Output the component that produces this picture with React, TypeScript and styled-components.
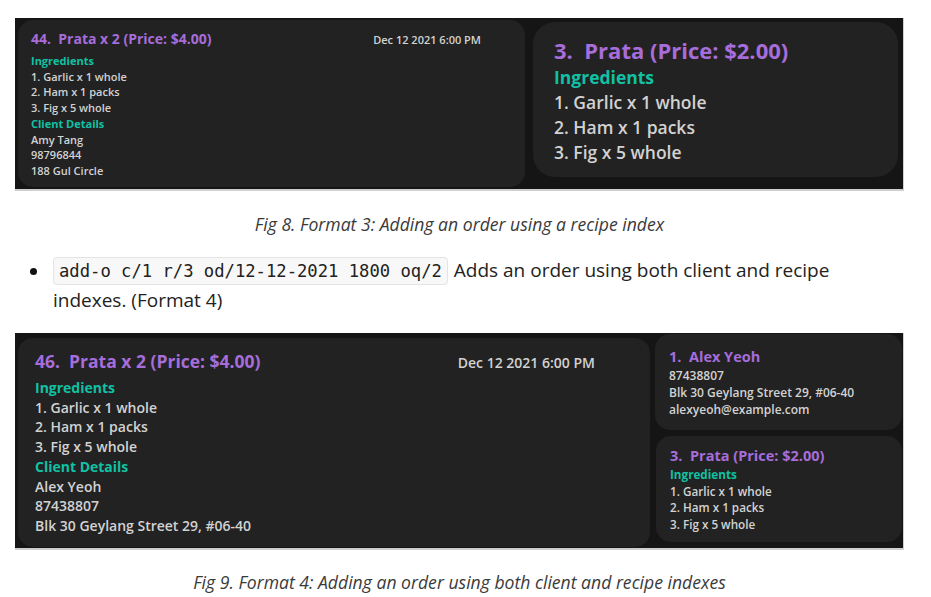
import React from "react";
import styled, { createGlobalStyle } from "styled-components";

const GlobalStyle = createGlobalStyle`
  html, body { margin: 0; padding: 0; background: #ffffff; }
  body { font-family: "Open Sans", "Liberation Sans", sans-serif; }
`;

const PURPLE = "#a66ddb";
const TEAL = "#11c1a3";
const TEXT = "#d2d2d2";

const Page = styled.div`
  width: 931px;
  height: 597px;
  box-sizing: border-box;
  padding: 18px 0 0 15px;
  overflow: hidden;
  display: flex;
  flex-direction: column;
`;

const Shot = styled.div<{ $h: number; $pl: number; $mt: number }>`
  width: 889px;
  height: ${(p) => p.$h}px;
  margin-top: ${(p) => p.$mt}px;
  box-sizing: border-box;
  flex-shrink: 0;
  padding-left: ${(p) => p.$pl}px;
  background: #151515;
  border-right: 1px solid #cfcfcf;
  border-bottom: 2px solid #cfcfcf;
  display: flex;
  align-items: flex-start;
  font-family: "Open Sans", sans-serif;
  font-weight: 600;
  color: ${TEXT};
`;

const Card = styled.div<{ $w: number; $h: number; $mt: number; $ml: number; $pt: number; $pl: number; $r?: number }>`
  width: ${(p) => p.$w}px;
  height: ${(p) => p.$h}px;
  margin-top: ${(p) => p.$mt}px;
  margin-left: ${(p) => p.$ml}px;
  padding: ${(p) => p.$pt}px 0 0 ${(p) => p.$pl}px;
  box-sizing: border-box;
  background: #222222;
  border-radius: ${(p) => p.$r ?? 15}px;
  flex-shrink: 0;
  display: flex;
  flex-direction: column;
`;

const Column = styled.div<{ $mt: number; $ml: number; $gap: number }>`
  display: flex;
  flex-direction: column;
  margin-top: ${(p) => p.$mt}px;
  margin-left: ${(p) => p.$ml}px;
  gap: ${(p) => p.$gap}px;
`;

const TitleRow = styled.div<{ $dateRight: number }>`
  display: flex;
  align-items: baseline;
  padding-right: ${(p) => p.$dateRight}px;
`;

const Title = styled.div<{ $size: number; $lh: number; $mb: number }>`
  color: ${PURPLE};
  font-weight: 700;
  font-size: ${(p) => p.$size}px;
  line-height: ${(p) => p.$lh}px;
  margin-bottom: ${(p) => p.$mb}px;
  white-space: pre;
`;

const DateText = styled.div<{ $size: number }>`
  margin-left: auto;
  font-size: ${(p) => p.$size}px;
  color: ${TEXT};
  white-space: nowrap;
`;

const Heading = styled.div<{ $size: number; $lh: number }>`
  color: ${TEAL};
  font-weight: 700;
  font-size: ${(p) => p.$size}px;
  line-height: ${(p) => p.$lh}px;
`;

const Line = styled.div<{ $size: number; $lh: number }>`
  font-size: ${(p) => p.$size}px;
  line-height: ${(p) => p.$lh}px;
  white-space: nowrap;
`;

const Caption = styled.div<{ $mt: number }>`
  width: 889px;
  text-align: center;
  font-family: "Open Sans", sans-serif;
  font-style: italic;
  font-size: 17.6px;
  line-height: 24px;
  color: #3a3a3a;
  margin-top: ${(p) => p.$mt}px;
`;

const List = styled.ul`
  list-style: none;
  margin: 20px 0 0 0;
  padding: 0;
  flex-shrink: 0;
`;

const Item = styled.li`
  position: relative;
  padding-left: 38px;
  width: 800px;
  font-family: "Open Sans", sans-serif;
  font-size: 19px;
  line-height: 29px;
  color: #222222;
  &::before {
    content: "";
    position: absolute;
    left: 15px;
    top: 12px;
    width: 7px;
    height: 7px;
    border-radius: 50%;
    background: #111111;
  }
`;

const Code = styled.code`
  font-family: "DejaVu Sans Mono", "Liberation Mono", monospace;
  font-size: 17.2px;
  padding: 3px 5px;
  margin-right: 1px;
  background: #f8f8f8;
  border: 1px solid #e4e4e4;
  border-radius: 4px;
  color: #222222;
`;

type Scale = {
  title: number;
  titleLh: number;
  titleMb: number;
  body: number;
  bodyLh: number;
};

const ingredients = ["1. Garlic x 1 whole", "2. Ham x 1 packs", "3. Fig x 5 whole"];

const OrderBody: React.FC<{
  s: Scale;
  index: string;
  date: string;
  dateRight: number;
  client: string[];
}> = ({ s, index, date, dateRight, client }) => (
  <>
    <TitleRow $dateRight={dateRight}>
      <Title $size={s.title} $lh={s.titleLh} $mb={s.titleMb}>
        {index + ".  Prata x 2 (Price: $4.00)"}
      </Title>
      <DateText $size={s.body}>{date}</DateText>
    </TitleRow>
    <Heading $size={s.body} $lh={s.bodyLh}>Ingredients</Heading>
    {ingredients.map((t) => (
      <Line key={t} $size={s.body} $lh={s.bodyLh}>{t}</Line>
    ))}
    <Heading $size={s.body} $lh={s.bodyLh}>Client Details</Heading>
    {client.map((t) => (
      <Line key={t} $size={s.body} $lh={s.bodyLh}>{t}</Line>
    ))}
  </>
);

const RecipeBody: React.FC<{ s: Scale }> = ({ s }) => (
  <>
    <Title $size={s.title} $lh={s.titleLh} $mb={s.titleMb}>
      {"3.  Prata (Price: $2.00)"}
    </Title>
    <Heading $size={s.body} $lh={s.bodyLh}>Ingredients</Heading>
    {ingredients.map((t) => (
      <Line key={t} $size={s.body} $lh={s.bodyLh}>{t}</Line>
    ))}
  </>
);

export default function App() {
  return (
    <>
      <GlobalStyle />
      <Page>
        <Shot $h={173} $pl={3} $mt={0}>
          <Card $w={507} $h={167} $mt={2} $ml={0} $pt={9} $pl={13}>
            <OrderBody
              s={{ title: 14, titleLh: 20, titleMb: 4, body: 11, bodyLh: 15.7 }}
              index="44"
              date="Dec 12 2021 6:00 PM"
              dateRight={44}
              client={["Amy Tang", "98796844", "188 Gul Circle"]}
            />
          </Card>
          <Card $w={365} $h={155} $mt={4} $ml={8} $pt={14} $pl={21} $r={22}>
            <RecipeBody s={{ title: 22, titleLh: 28, titleMb: 1, body: 17.5, bodyLh: 25 }} />
          </Card>
        </Shot>

        <Caption $mt={21}>Fig 8. Format 3: Adding an order using a recipe index</Caption>

        <List>
          <Item>
            <Code>add-o c/1 r/3 od/12-12-2021 1800 oq/2</Code>{" "}
            Adds an order using both client and recipe indexes. (Format 4)
          </Item>
        </List>

        <Shot $h={217} $pl={3} $mt={18}>
          <Card $w={632} $h={209} $mt={5} $ml={0} $pt={11} $pl={17}>
            <OrderBody
              s={{ title: 17.5, titleLh: 24, titleMb: 5, body: 14, bodyLh: 19.7 }}
              index="46"
              date="Dec 12 2021 6:00 PM"
              dateRight={55}
              client={["Alex Yeoh", "87438807", "Blk 30 Geylang Street 29, #06-40"]}
            />
          </Card>
          <Column $mt={1} $ml={5} $gap={6}>
            <Card $w={247} $h={96} $mt={0} $ml={0} $pt={13} $pl={14}>
              <Title $size={14.5} $lh={20} $mb={0}>{"1.  Alex Yeoh"}</Title>
              <Line $size={12} $lh={17}>87438807</Line>
              <Line $size={12} $lh={17}>Blk 30 Geylang Street 29, #06-40</Line>
              <Line $size={12} $lh={17}>alexyeoh@example.com</Line>
            </Card>
            <Card $w={246} $h={106} $mt={0} $ml={1} $pt={10} $pl={14}>
              <RecipeBody s={{ title: 14.5, titleLh: 20, titleMb: 0, body: 11.7, bodyLh: 16.7 }} />
            </Card>
          </Column>
        </Shot>

        <Caption $mt={20}>Fig 9. Format 4: Adding an order using both client and recipe indexes</Caption>
      </Page>
    </>
  );
}
